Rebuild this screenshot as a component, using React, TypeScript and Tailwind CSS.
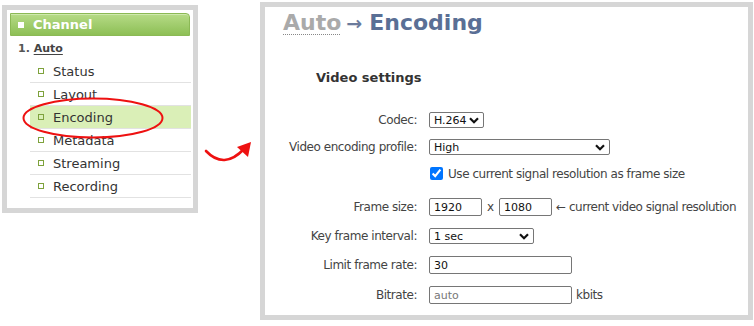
import React from 'react'

const menu = ['Status', 'Layout', 'Encoding', 'Metadata', 'Streaming', 'Recording']

function Chevron() {
  return (
    <svg width="10" height="7" viewBox="0 0 10 7" className="shrink-0">
      <path d="M1 1.2 L5 5.2 L9 1.2" fill="none" stroke="#111" strokeWidth="2.2" />
    </svg>
  )
}

function Select({ value, className }: { value: string; className: string }) {
  return (
    <div
      className={
        'flex items-center justify-between h-[16px] border border-[#767676] rounded-[2px] pl-[4px] pr-[4px] text-[11px] text-[#111] bg-white ' +
        className
      }
    >
      <span className="leading-none pt-[1px]">{value}</span>
      <Chevron />
    </div>
  )
}

function Field({ value, placeholder, className }: { value?: string; placeholder?: string; className: string }) {
  return (
    <input
      defaultValue={value}
      placeholder={placeholder}
      className={
        'h-[18px] border border-[#767676] rounded-[2px] px-[4px] text-[11px] text-[#111] placeholder:text-[#777] outline-none bg-white ' +
        className
      }
    />
  )
}

function Row({ label, mt, h, children }: { label: string; mt: string; h: string; children: React.ReactNode }) {
  return (
    <div className={'flex items-center ' + mt + ' ' + h}>
      <div className="w-[152px] text-right text-[12px] tracking-[-0.45px] text-[#444] shrink-0">{label}</div>
      <div className="ml-[12px] flex items-center">{children}</div>
    </div>
  )
}

export default function App() {
  return (
    <div className="relative w-[754px] h-[326px] bg-white flex items-start font-['DejaVu_Sans',sans-serif] overflow-hidden">
      {/* left nav panel */}
      <div className="ml-[2px] mt-[5px] w-[196px] h-[208px] border-[5px] border-[#d6d6d6] flex flex-col">
        <div className="mx-[3px] mt-[3px] h-[23px] flex items-center rounded-tr-[4px] border border-[#8bb955] bg-gradient-to-b from-[#b6db86] to-[#8dbf55] shadow-[inset_0_1px_0_#cfe9ad]">
          <span className="ml-[7px] w-[6px] h-[6px] bg-white" />
          <span className="ml-[9px] text-[13px] font-bold text-white leading-none">Channel</span>
        </div>
        <div className="h-[24px] flex items-center pt-[2px] pl-[11px] text-[11px] font-bold text-[#555]">
          1.&nbsp;<span className="underline underline-offset-2 text-[#444]">Auto</span>
        </div>
        <div className="ml-[23px] mr-[2px] flex flex-col">
          {menu.map((m) => (
            <div
              key={m}
              className={
                'h-[23px] flex items-center border-b border-[#e2e2e2] ' + (m === 'Encoding' ? 'bg-[#daefb7]' : '')
              }
            >
              <span className="ml-[8px] w-[6px] h-[6px] border-[1.5px] border-[#7ea23c]" />
              <span className="ml-[9px] text-[13px] text-[#333] leading-none">{m}</span>
            </div>
          ))}
        </div>
      </div>

      {/* curved arrow between panels */}
      <div className="w-[62px] shrink-0">
        <svg width="62" height="170" viewBox="0 0 62 170">
          <path d="M8 151 Q 26 170 46 149" fill="none" stroke="#ee1111" strokeWidth="2.6" strokeLinecap="round" />
          <path d="M53 142 L39 147 L50 157 Z" fill="#ee1111" />
        </svg>
      </div>

      {/* settings panel */}
      <div className="mt-[2px] w-[493px] h-[318px] border-[5px] border-[#d6d6d6] flex flex-col">
        <div className="mt-[3px] ml-[18px] h-[26px] flex items-center leading-[26px] text-[22px] font-bold">
          <span className="text-[#aaaaaa] underline decoration-dotted decoration-[#888] decoration-1 underline-offset-[4px]">
            Auto
          </span>
          <span className="ml-[5px] text-[19px] text-[#6b7b9c] font-bold leading-none">→</span>
          <span className="ml-[7px] text-[#5a6f95]">Encoding</span>
        </div>
        <div className="mt-[34px] ml-[51px] text-[13px] font-bold text-[#333] leading-[16px]">Video settings</div>

        <Row label="Codec:" mt="mt-[26px]" h="h-[16px]">
          <Select value="H.264" className="w-[55px]" />
        </Row>
        <Row label="Video encoding profile:" mt="mt-[11px]" h="h-[16px]">
          <Select value="High" className="w-[181px]" />
        </Row>
        <Row label="" mt="mt-[12px]" h="h-[13px]">
          <input type="checkbox" defaultChecked className="ml-[1px] w-[13px] h-[13px] accent-[#0075ff] m-0" />
          <span className="ml-[5px] text-[12px] tracking-[-0.45px] text-[#444]">
            Use current signal resolution as frame size
          </span>
        </Row>
        <Row label="Frame size:" mt="mt-[18px]" h="h-[18px]">
          <Field value="1920" className="w-[53px]" />
          <span className="ml-[5px] mr-[5px] text-[12px] text-[#444]">x</span>
          <Field value="1080" className="w-[53px]" />
          <span className="ml-[4px] text-[12px] tracking-[-0.5px] text-[#444] whitespace-nowrap">
            ← current video signal resolution
          </span>
        </Row>
        <Row label="Key frame interval:" mt="mt-[12px]" h="h-[16px]">
          <Select value="1 sec" className="w-[105px]" />
        </Row>
        <Row label="Limit frame rate:" mt="mt-[12px]" h="h-[18px]">
          <Field value="30" className="w-[143px]" />
        </Row>
        <Row label="Bitrate:" mt="mt-[12px]" h="h-[18px]">
          <Field placeholder="auto" className="w-[143px]" />
          <span className="ml-[4px] text-[12px] tracking-[-0.45px] text-[#444]">kbits</span>
        </Row>
      </div>

      {/* red highlight ring over the Encoding item */}
      <svg className="absolute left-[21px] top-[96px]" width="144" height="44" viewBox="0 0 144 44">
        <ellipse cx="72" cy="22" rx="69.5" ry="19.5" fill="none" stroke="#ee1111" strokeWidth="2" />
      </svg>
    </div>
  )
}
